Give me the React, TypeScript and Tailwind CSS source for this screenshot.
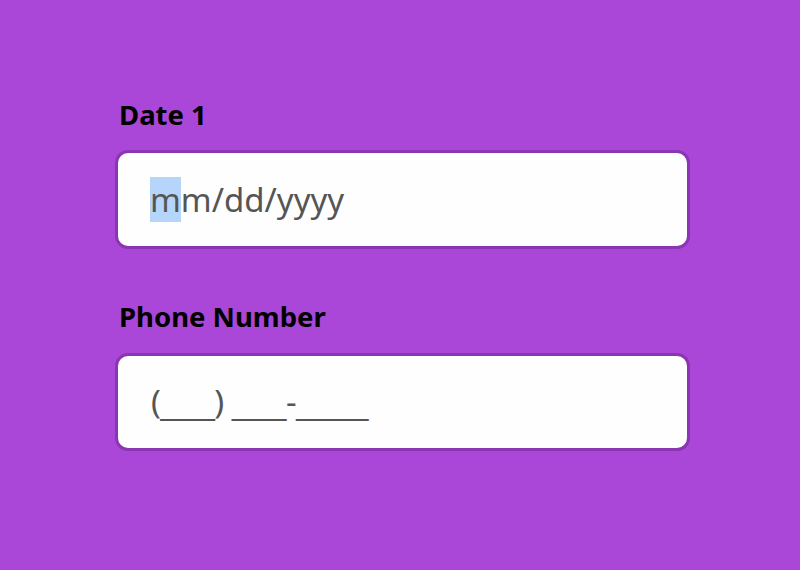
export default function App() {
  const us = (n: string) => <span style={{ fontFamily: '"Liberation Sans", sans-serif' }}>{n}</span>;
  return (
    <div className="w-[800px] h-[570px] bg-[#aa47d9] pt-[95px] pl-[115px]" style={{ fontFamily: '"Noto Sans", sans-serif' }}>
      <div className="w-[575px] flex flex-col">
        <div className="pl-[4px] text-[27.5px] font-bold leading-[40px] text-black">Date 1</div>
        <div className="mt-[15px] h-[99px] rounded-[13px] border-[3.5px] border-[#8a36b2] bg-[#fefefe] flex items-center pl-[32px]">
          <span className="text-[33px] text-[#555555] leading-[45px]"><span className="bg-[#b5d5fb]">m</span>m/dd/yyyy</span>
        </div>
        <div className="mt-[48px] pl-[4px] text-[27.5px] font-bold leading-[40px] text-black">Phone Number</div>
        <div className="mt-[16px] h-[98px] rounded-[13px] border-[3.5px] border-[#8a36b2] bg-[#fefefe] flex items-center pl-[33px]">
          <span className="text-[33px] text-[#555555] leading-[45px] tracking-[-0.4px]">({us("___")}) {us("___")}-{us("____")}</span>
        </div>
      </div>
    </div>
  );
}
